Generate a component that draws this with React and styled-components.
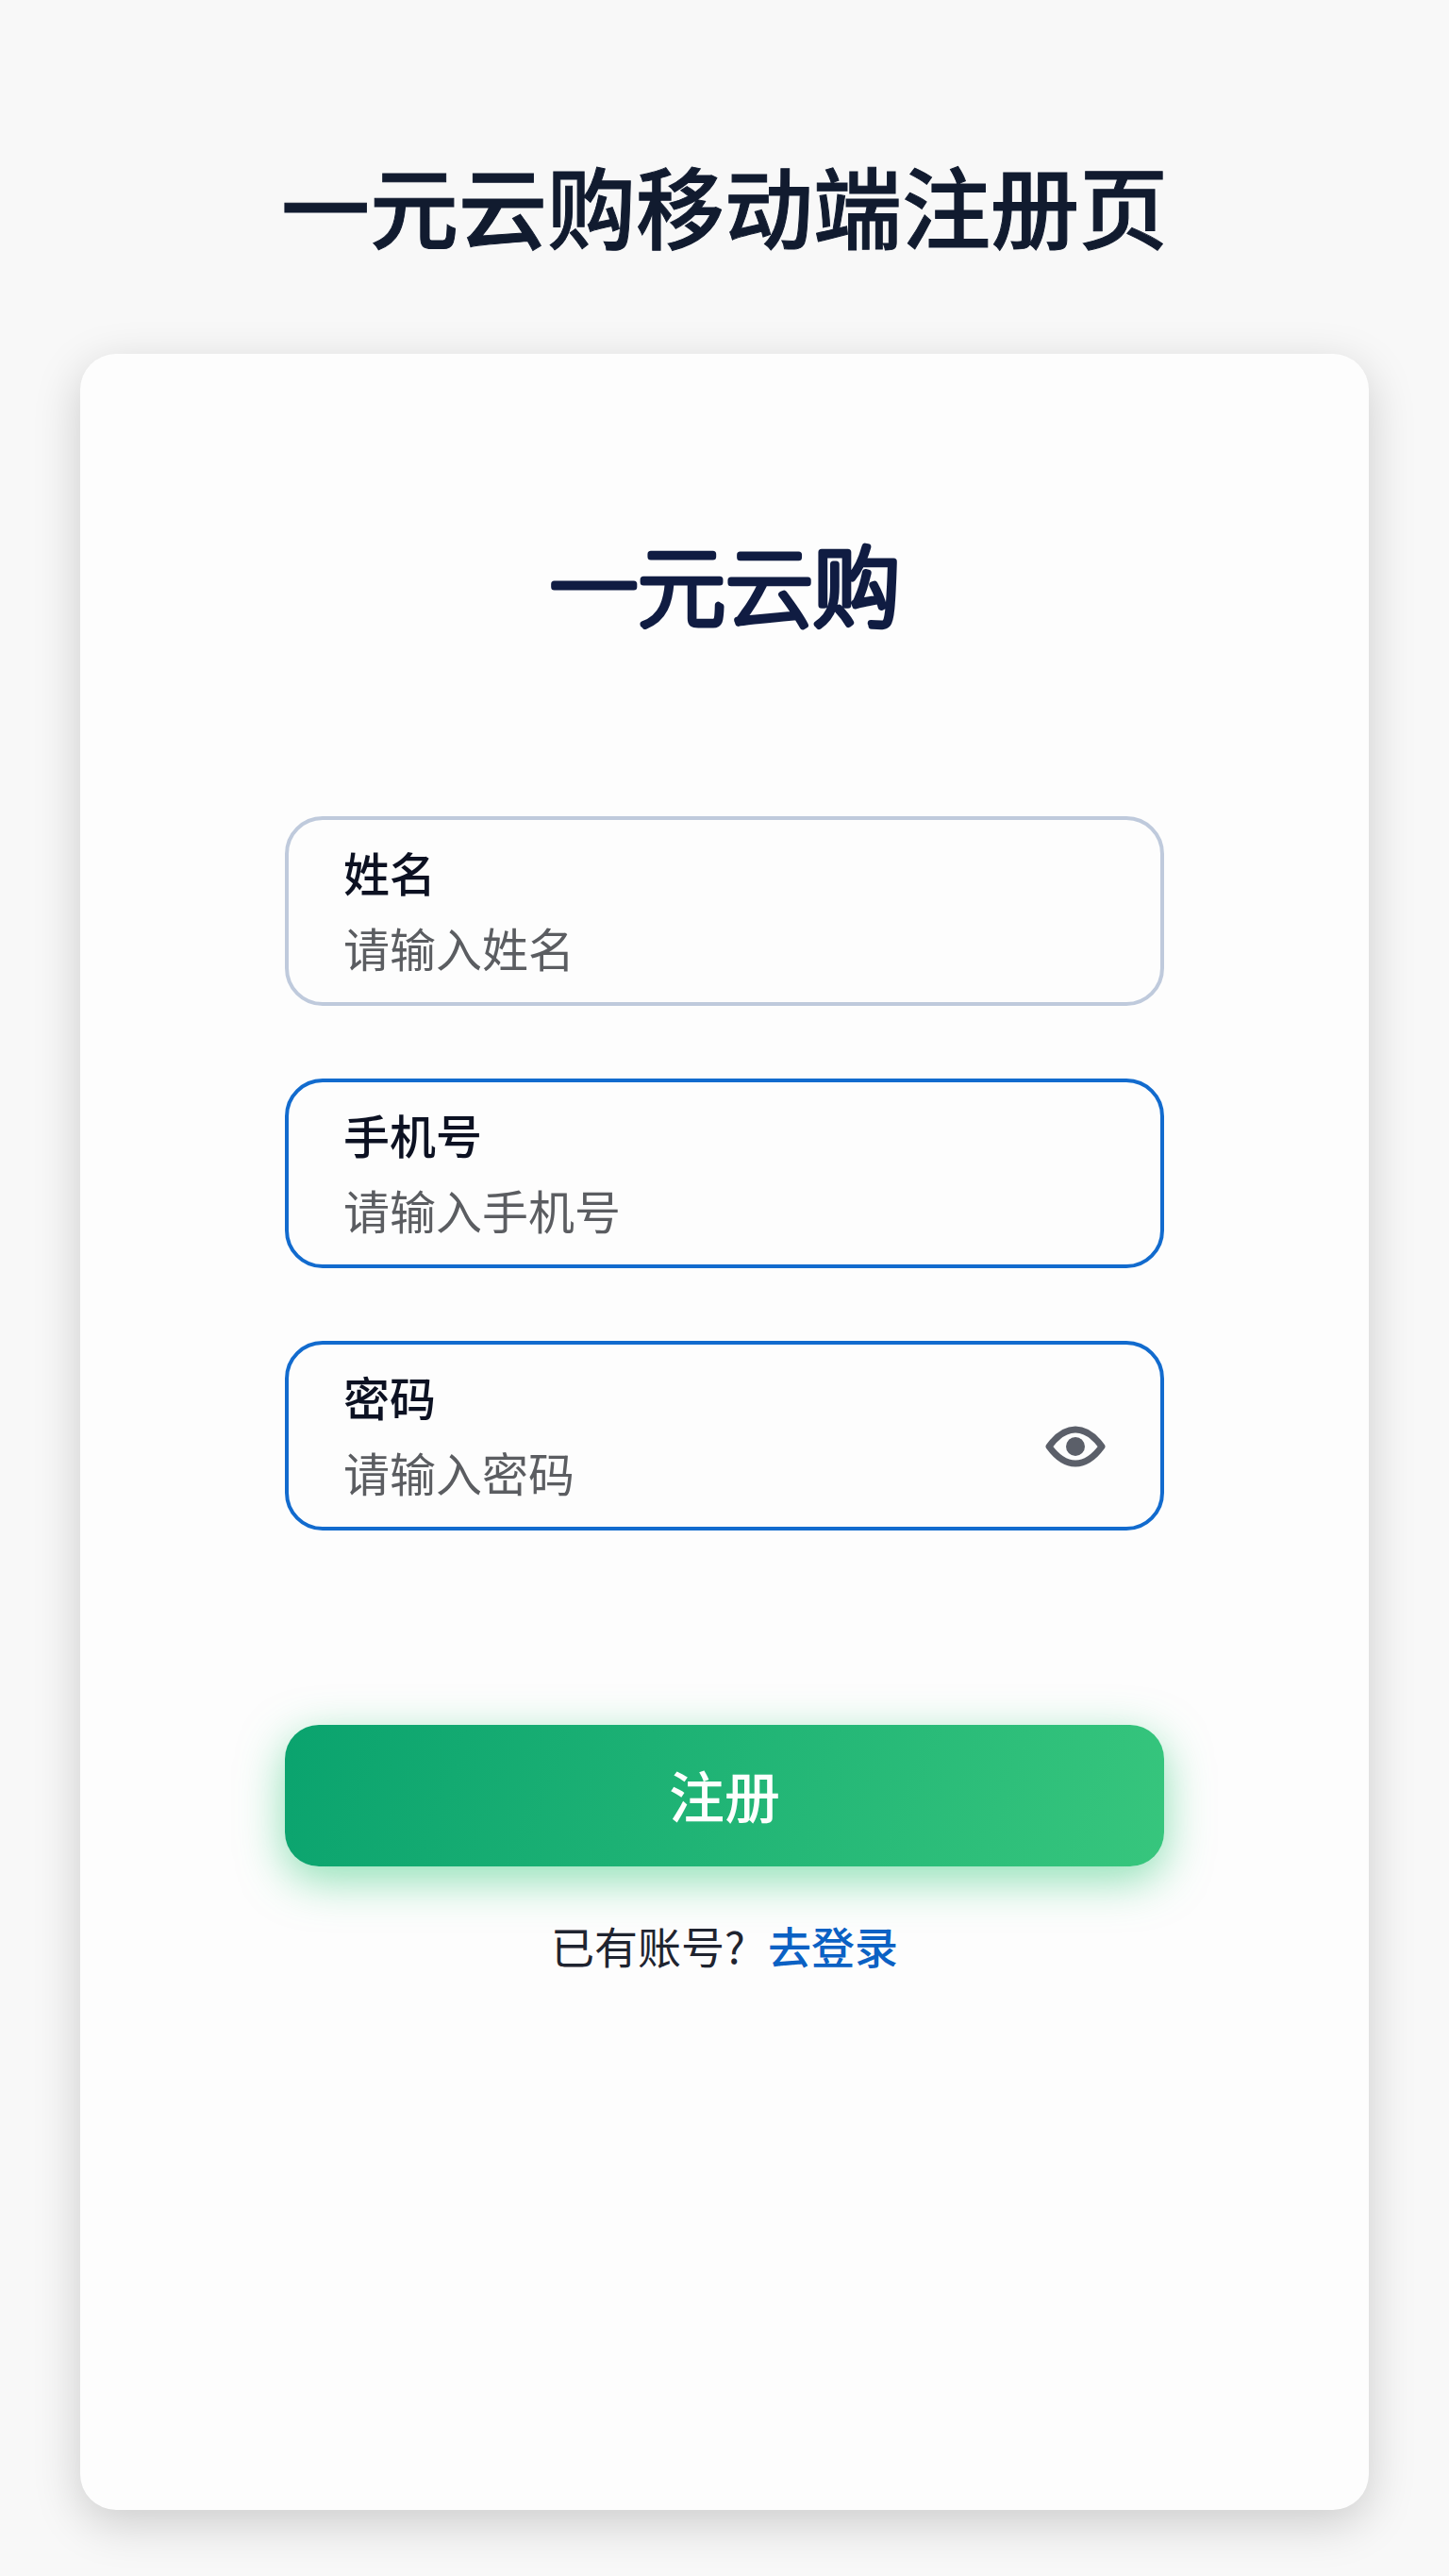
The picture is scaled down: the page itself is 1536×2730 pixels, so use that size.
import {useState} from 'react'
import styled, {createGlobalStyle} from 'styled-components'

const GlobalStyle = createGlobalStyle`
  *, *::before, *::after {
    box-sizing: border-box;
  }

  body {
    margin: 0;
    background-color: #f8f8f8;
    font-family: 'Noto Sans CJK SC', 'Noto Sans', sans-serif;
  }

  input, button {
    font-family: inherit;
  }
`

const Page = styled.div`
  display: flex;
  flex-direction: column;
  min-height: 100vh;
  padding: 156px 85px 70px;
`

const Title = styled.h1`
  margin: 0 0 99px;
  color: #111b2f;
  font-size: 94px;
  font-weight: 500;
  line-height: 120px;
  text-align: center;
  -webkit-text-stroke: 1px #111b2f;
`

const Card = styled.main`
  display: flex;
  flex-direction: column;
  align-items: center;
  flex-grow: 1;
  padding: 182px 40px 80px;
  border-radius: 38px;
  background-color: #fdfdfd;
  box-shadow: 0 14px 50px rgba(0, 0, 0, 0.18);
`

const Logo = styled.svg`
  display: block;
  width: 380px;
  height: 120px;
  margin-bottom: 188px;
  overflow: visible;
`

const LogoText = styled.text`
  fill: #101c42;
  stroke: #101c42;
  stroke-width: 7px;
  stroke-linejoin: round;
  font-size: 93px;
  font-weight: 100;
  text-anchor: middle;
`

const Form = styled.form`
  display: flex;
  flex-direction: column;
  width: 100%;
  max-width: 932px;
`

const Fields = styled.div`
  display: flex;
  flex-direction: column;
  gap: 77px;
  margin-bottom: 206px;
`

const FieldBox = styled.div`
  display: flex;
  align-items: center;
  padding: 15px 58px 18px;
  border: 4px solid ${props => props.$active ? '#126bce' : '#bfcadc'};
  border-radius: 40px;
`

const FieldText = styled.div`
  display: flex;
  flex-direction: column;
  flex-grow: 1;
  min-width: 0;
`

const Label = styled.label`
  color: #0c1122;
  font-size: 49px;
  font-weight: 500;
  line-height: 80px;
`

const Input = styled.input`
  width: 100%;
  height: 80px;
  padding: 0;
  border: 0;
  outline: 0;
  background: transparent;
  color: #0c1122;
  font-size: 49px;
  line-height: 80px;

  &::placeholder {
    color: #5b5d61;
    opacity: 1;
  }
`

const EyeButton = styled.button`
  flex-shrink: 0;
  padding: 26px 0 0;
  border: 0;
  background: none;
  cursor: pointer;

  svg {
    display: block;
  }
`

const SubmitButton = styled.button`
  height: 150px;
  padding: 0 0 4px;
  border: 0;
  border-radius: 36px;
  background: linear-gradient(110deg, #0aa36e, #37c67d);
  box-shadow: 0 14px 48px rgba(47, 200, 120, 0.55);
  color: #fdfffd;
  font-size: 59px;
  font-weight: 500;
  cursor: pointer;
`

const Footer = styled.p`
  display: flex;
  justify-content: center;
  gap: 24px;
  margin: 51px 0 0;
  color: #1f2430;
  font-size: 46px;
  line-height: 64px;
`

const LoginLink = styled.a`
  color: #0b61c4;
  font-weight: 500;
  text-decoration: none;
`

const EyeIcon = () =>
  <svg width='64' height='44' viewBox='0 0 64 44' fill='none'>
    <path
      d='M4 22C12 11 21 4 32 4S52 11 60 22C52 33 43 40 32 40S12 33 4 22Z'
      stroke='#5b5f69'
      strokeWidth='7'
      strokeLinejoin='round'
    />
    <circle cx='32' cy='22' r='10' fill='#5b5f69' />
  </svg>

const Field = ({id, label, active, type = 'text', action}) =>
  <FieldBox $active={active}>
    <FieldText>
      <Label htmlFor={id}>{label}</Label>
      <Input id={id} name={id} type={type} placeholder={`请输入${label}`} />
    </FieldText>
    {action}
  </FieldBox>

const App = () => {
  const [visible, setVisible] = useState(false)

  return (
    <>
      <GlobalStyle />
      <Page>
        <Title>一元云购移动端注册页</Title>
        <Card>
          <Logo viewBox='0 0 380 120'>
            <LogoText x='191' y='100'>一元云购</LogoText>
          </Logo>
          <Form onSubmit={e => e.preventDefault()}>
            <Fields>
              <Field id='name' label='姓名' />
              <Field id='phone' label='手机号' type='tel' active />
              <Field
                id='password'
                label='密码'
                type={visible ? 'text' : 'password'}
                active
                action={
                  <EyeButton type='button' aria-label='显示密码' onClick={() => setVisible(!visible)}>
                    <EyeIcon />
                  </EyeButton>
                }
              />
            </Fields>
            <SubmitButton type='submit'>注册</SubmitButton>
          </Form>
          <Footer>
            <span>已有账号?</span>
            <LoginLink href='#login'>去登录</LoginLink>
          </Footer>
        </Card>
      </Page>
    </>
  )
}

export default App
